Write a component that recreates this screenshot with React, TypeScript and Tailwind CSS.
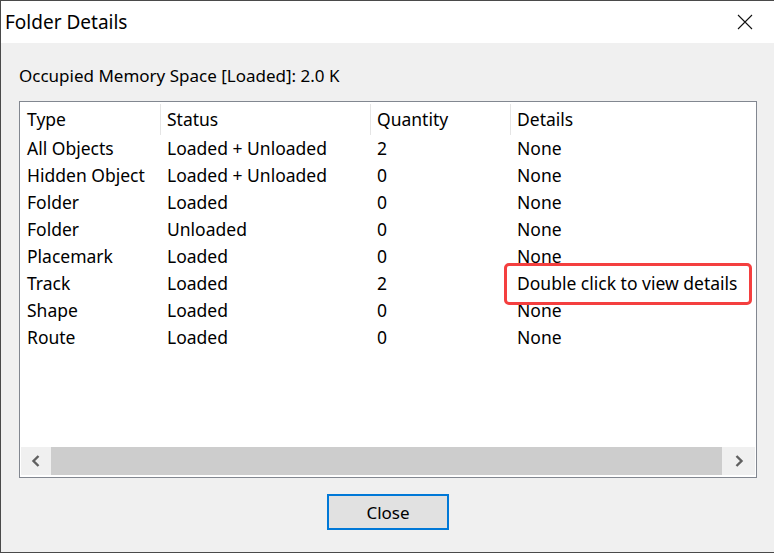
import React from 'react';

const rows = [
  ['All Objects', 'Loaded + Unloaded', '2', 'None'],
  ['Hidden Object', 'Loaded + Unloaded', '0', 'None'],
  ['Folder', 'Loaded', '0', 'None'],
  ['Folder', 'Unloaded', '0', 'None'],
  ['Placemark', 'Loaded', '0', 'None'],
  ['Track', 'Loaded', '2', 'Double click to view details'],
  ['Shape', 'Loaded', '0', 'None'],
  ['Route', 'Loaded', '0', 'None'],
];

const font = { fontFamily: '"Noto Sans", "Open Sans", sans-serif' };

export default function App() {
  return (
    <div
      className="w-[774px] h-[553px] bg-[#f0f0f0] border-t border-l border-b border-[#4a4a4a] flex flex-col text-black overflow-hidden"
      style={font}
    >
      {/* Title bar */}
      <div className="h-[42px] bg-white flex items-center justify-between shrink-0">
        <span className="pl-[4px] text-[19px] leading-none">Folder Details</span>
        <svg className="mr-[21px]" width="16" height="16" viewBox="0 0 16 16">
          <path d="M1 1 L15 15 M15 1 L1 15" stroke="#111" strokeWidth="1.1" fill="none" />
        </svg>
      </div>

      {/* Body */}
      <div className="flex flex-col flex-1 px-[18px]">
        <div className="h-[58px] flex items-center text-[17px] pt-[7px]">
          Occupied Memory Space [Loaded]: 2.0 K
        </div>

        <div className="relative w-[738px] h-[377px] border border-[#828790] bg-white p-px flex flex-col text-[17.5px]">
          {/* Header */}
          <div className="h-[32px] flex items-center">
            <div className="w-[139px] pl-[6px]">Type</div>
            <div className="w-[210px] h-[31px] border-l border-[#e5e5e5] flex items-center pl-[6px]">Status</div>
            <div className="w-[140px] h-[31px] border-l border-[#e5e5e5] flex items-center pl-[6px]">Quantity</div>
            <div className="flex-1 h-[31px] border-l border-[#e5e5e5] flex items-center pl-[6px]">Details</div>
          </div>
          {rows.map((r, i) => (
            <div key={i} className="h-[27px] flex items-center whitespace-nowrap">
              <div className="w-[139px] pl-[6px]">{r[0]}</div>
              <div className="w-[210px] pl-[7px]">{r[1]}</div>
              <div className="w-[140px] pl-[7px]">{r[2]}</div>
              <div className="flex-1 pl-[7px]">{r[3]}</div>
            </div>
          ))}
          <div className="flex-1" />

          {/* Horizontal scrollbar */}
          <div className="h-[28px] flex bg-[#f0f0f0] mb-px">
            <div className="w-[30px] flex items-center justify-center">
              <svg width="10" height="12" viewBox="0 0 10 12">
                <path d="M7.5 1 L2.5 6 L7.5 11" stroke="#606060" strokeWidth="2.4" fill="none" />
              </svg>
            </div>
            <div className="flex-1 bg-[#cdcdcd]" />
            <div className="w-[33px] flex items-center justify-center">
              <svg width="10" height="12" viewBox="0 0 10 12">
                <path d="M2.5 1 L7.5 6 L2.5 11" stroke="#606060" strokeWidth="2.4" fill="none" />
              </svg>
            </div>
          </div>

          {/* Highlight */}
          <div className="absolute left-[484px] top-[161px] w-[248px] h-[42px] border-[3px] border-[#f43f3f] rounded-[5px]" />
        </div>

        <div className="flex justify-center pt-[16px]">
          <button className="w-[122px] h-[36px] ml-[1px] bg-[#e1e1e1] border-2 border-[#0078d7] text-[17px] leading-none">
            Close
          </button>
        </div>
      </div>
    </div>
  );
}
